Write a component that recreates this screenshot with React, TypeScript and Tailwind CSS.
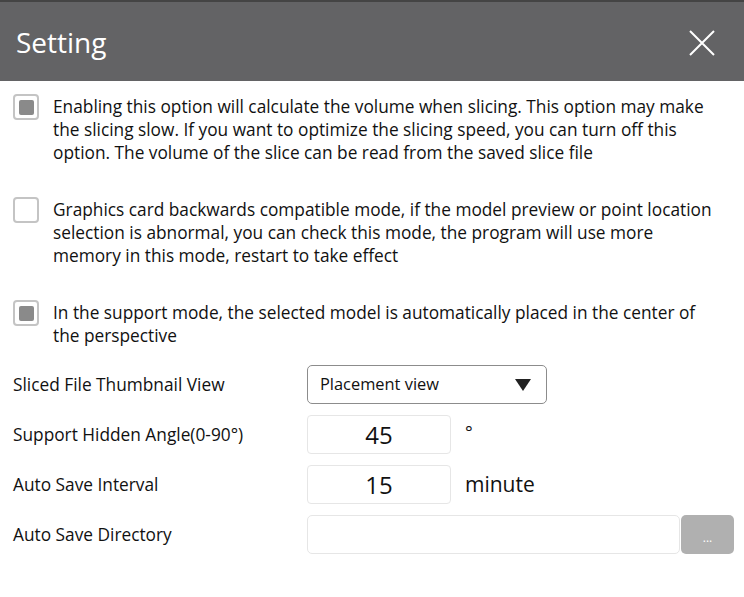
import React, { useState } from 'react';

const font = { fontFamily: '"Open Sans", "Noto Sans", sans-serif' };

// Square-in-box checkbox used by the desktop settings dialog
const Check = ({ checked, onToggle }: { checked: boolean; onToggle: () => void }) => (
  <button
    onClick={onToggle}
    className="mt-[-1px] flex h-[26px] w-[26px] shrink-0 items-center justify-center rounded-[4px] border-2 border-[#c4c4c4] bg-white"
  >
    {checked && <span className="block h-[15px] w-[15px] rounded-[2px] bg-[#8a8a8a]" />}
  </button>
);

const Setting = () => {
  const [opts, setOpts] = useState([true, false, true]);
  const toggle = (i: number) => setOpts((prev) => prev.map((v, j) => (j === i ? !v : v)));

  const options = [
    'Enabling this option will calculate the volume when slicing. This option may make the slicing slow. If you want to optimize the slicing speed, you can turn off this option. The volume of the slice can be read from the saved slice file',
    'Graphics card backwards compatible mode, if the model preview or point location selection is abnormal, you can check this mode, the program will use more memory in this mode, restart to take effect',
    'In the support mode, the selected model is automatically placed in the center of the perspective',
  ];

  return (
    <div className="h-[597px] w-[744px] bg-white text-[#111]" style={font}>
      <div className="flex h-[81px] items-center justify-between border-t-2 border-[#444] bg-[#636365] pl-[16px] pr-[28px]">
        <h1 className="text-[28px] text-white">Setting</h1>
        <svg width="28" height="28" viewBox="0 0 28 28" className="mt-[2px]">
          <path d="M2 2L26 26M26 2L2 26" stroke="#fff" strokeWidth="2" />
        </svg>
      </div>

      <div className="flex flex-col gap-[34px] pl-[13px] pr-[30px] pt-[14px]">
        {options.map((text, i) => (
          <div key={i} className="flex gap-[14px]">
            <Check checked={opts[i]} onToggle={() => toggle(i)} />
            <p className="text-[17.3px] leading-[23px]">{text}</p>
          </div>
        ))}
      </div>

      <div className="mt-[18px] flex flex-col gap-[11px] pl-[13px] text-[17.3px]">
        <div className="flex h-[39px] items-center">
          <span className="w-[294px]">Sliced File Thumbnail View</span>
          <div className="flex h-[39px] w-[240px] items-center justify-between rounded-[5px] border border-[#8c8c8c] pl-[12px] pr-[15px]">
            <span className="text-[16.4px]">Placement view</span>
            <svg width="16" height="12" viewBox="0 0 16 12">
              <path d="M0 0H16L8 12Z" fill="#222" />
            </svg>
          </div>
        </div>
        <div className="flex h-[39px] items-center">
          <span className="w-[294px]">Support Hidden Angle(0-90°)</span>
          <div className="flex h-[39px] w-[144px] items-center justify-center rounded-[4px] border border-[#e6e6e6] text-[24px]">45</div>
          <span className="ml-[14px] self-start pt-[4px] text-[18px]">°</span>
        </div>
        <div className="flex h-[39px] items-center">
          <span className="w-[294px]">Auto Save Interval</span>
          <div className="flex h-[39px] w-[144px] items-center justify-center rounded-[4px] border border-[#e6e6e6] text-[24px]">15</div>
          <span className="ml-[14px] text-[21px]">minute</span>
        </div>
        <div className="flex h-[39px] items-center">
          <span className="w-[294px]">Auto Save Directory</span>
          <div className="h-[39px] w-[373px] rounded-[5px] border border-[#e6e6e6]" />
          <button className="ml-[1px] flex h-[39px] w-[53px] items-center justify-center rounded-[5px] bg-[#b0b0b0] pt-[6px] text-[12px] text-white">
            ...
          </button>
        </div>
      </div>
    </div>
  );
};

export default function App() {
  return <Setting />;
}
